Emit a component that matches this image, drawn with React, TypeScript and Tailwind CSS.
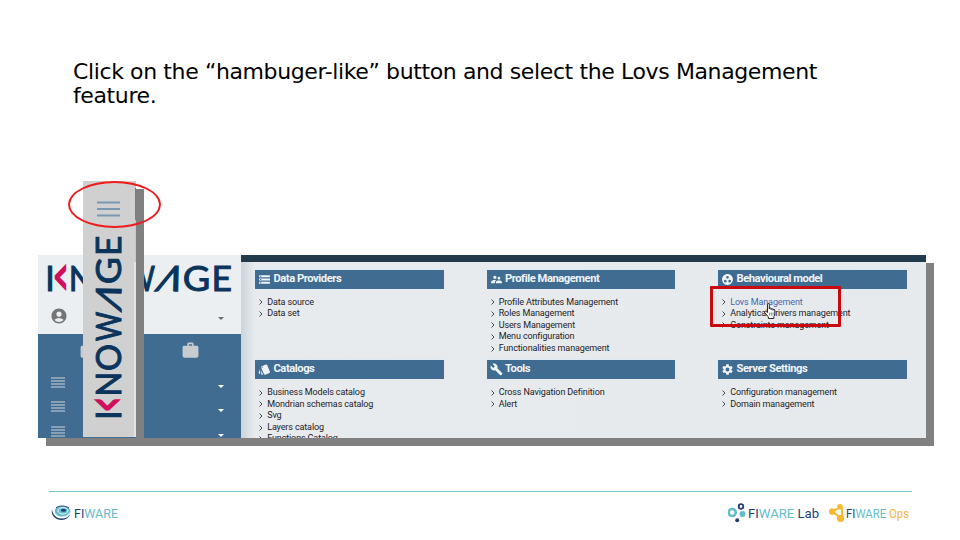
import React from "react";
import {
  MdAccountCircle,
  MdBuild,
  MdGroupWork,
  MdSettings,
  MdStorage,
  MdStyle,
  MdSupervisorAccount,
  MdWork,
} from "react-icons/md";
import type { IconType } from "react-icons";

type Section = { title: string; icon: IconType; items: string[]; active?: string };

const sections: Section[] = [
  { title: "Data Providers", icon: MdStorage, items: ["Data source", "Data set"] },
  {
    title: "Profile Management",
    icon: MdSupervisorAccount,
    items: [
      "Profile Attributes Management",
      "Roles Management",
      "Users Management",
      "Menu configuration",
      "Functionalities management",
    ],
  },
  {
    title: "Behavioural model",
    icon: MdGroupWork,
    items: ["Lovs Management", "Analytical drivers management", "Constraints management"],
    active: "Lovs Management",
  },
  {
    title: "Catalogs",
    icon: MdStyle,
    items: [
      "Business Models catalog",
      "Mondrian schemas catalog",
      "Svg",
      "Layers catalog",
      "Functions Catalog",
    ],
  },
  { title: "Tools", icon: MdBuild, items: ["Cross Navigation Definition", "Alert"] },
  {
    title: "Server Settings",
    icon: MdSettings,
    items: ["Configuration management", "Domain management"],
  },
];

function KnowageLogo({ className }: { className?: string }) {
  return (
    <svg
      viewBox="0 0 184 26"
      width="184"
      height="26"
      className={`block overflow-visible font-['Lato',sans-serif] text-[34.5px] ${className ?? ""}`}
      fill="#0b345c"
      stroke="#0b345c"
      strokeWidth="1"
    >
      <text x="-2.7" y="25.2" textLength="9.5" lengthAdjust="spacingAndGlyphs">I</text>
      <text transform="translate(5.2 29) scale(0.76 1.5)" x="0" y="0" fill="#d0105c" stroke="#d0105c" strokeWidth="1.7">
        &lt;
      </text>
      <text x="20.8" y="25.2" textLength="25" lengthAdjust="spacingAndGlyphs">N</text>
      <text x="46.8" y="25.2" textLength="27.5" lengthAdjust="spacingAndGlyphs">O</text>
      <text x="77" y="25.2" textLength="30" lengthAdjust="spacingAndGlyphs">W</text>
      <text transform="translate(106.5 25.2) skewX(-23)" textLength="23" lengthAdjust="spacingAndGlyphs" strokeWidth="1.4">
        Λ
      </text>
      <text x="134.7" y="25.2" textLength="27.5" lengthAdjust="spacingAndGlyphs">G</text>
      <text x="163.5" y="25.2" textLength="20.5" lengthAdjust="spacingAndGlyphs">E</text>
    </svg>
  );
}

function Caret({ className }: { className: string }) {
  return (
    <svg viewBox="0 0 6 3" className={`h-[3px] w-[6px] ${className}`} fill="currentColor">
      <path d="M0 0h6L3 3z" />
    </svg>
  );
}

function MenuLines() {
  return (
    <svg viewBox="0 0 14 11" className="h-[11px] w-[14px]" stroke="#cdd3d8" strokeWidth="1.1">
      <path d="M0 1h14M0 4h14M0 7h14M0 10h14" />
    </svg>
  );
}

function Sidebar() {
  return (
    <aside className="flex h-full w-[203px] shrink-0 flex-col">
      <div className="h-[79px] bg-[#ebeff2] pt-[10.5px]">
        <div className="pl-[10px]">
          <KnowageLogo />
        </div>
        <div className="flex items-center justify-between pt-[15px] pl-[11.5px] pr-[17px]">
          <MdAccountCircle className="size-[18px] text-[#757575]" />
          <Caret className="mt-[6px] text-[#6b6b6b]" />
        </div>
      </div>
      <div className="flex-1 overflow-hidden bg-[#406c92]">
        <div className="flex h-[36px] pt-[7px] text-[#c9cccf]">
          <MdWork className="ml-[41px] size-[19px]" />
          <MdWork className="ml-[82.5px] size-[19px]" />
        </div>
        {[0, 1, 2].map((row) => (
          <div key={row} className="flex h-[24.5px] items-center justify-between pl-[13px] pr-[17px]">
            <MenuLines />
            <Caret className="mt-[8px] text-white" />
          </div>
        ))}
      </div>
    </aside>
  );
}

function MenuSection({ title, icon: Icon, items, active }: Section) {
  return (
    <section className="w-[188.5px]">
      <h2 className="flex h-[19px] items-center bg-[#406c92] pl-[3px] text-[11.2px] font-bold tracking-[-0.45px] text-[#f1f5f8] shadow-[0_-2px_0_#dfeaf3]">
        <Icon className="mr-[2.5px] size-[13px] shrink-0" />
        <span className="whitespace-nowrap">{title}</span>
      </h2>
      <ul className="pt-[8px]">
        {items.map((item) => (
          <li
            key={item}
            className={`flex h-[11.6px] items-center pl-[4px] text-[9px] leading-[11.6px] tracking-[-0.12px] whitespace-nowrap ${
              item === active ? "text-[#4668ae]" : "text-[#1d2226]"
            }`}
          >
            <svg
              viewBox="0 0 4 6"
              className="mr-[4.2px] h-[6px] w-[4px] shrink-0"
              fill="none"
              stroke="#444b50"
              strokeWidth="1"
            >
              <path d="M.5.5 3 3 .5 5.5" />
            </svg>
            <span>{item}</span>
          </li>
        ))}
      </ul>
    </section>
  );
}

function MenuStrip() {
  return (
    <div className="absolute top-[181px] left-[83px] h-[256px] w-[53px] bg-[#d0d0d0]">
      <div className="absolute top-[8px] left-[53px] h-[249px] w-[8px] bg-[#808080]" />
      <div className="absolute top-0 right-0 h-[81px] w-px bg-[#c2c7ca]" />
      <div className="absolute top-[7px] right-0 h-[32px] w-px bg-[#5c86a6]" />
      <div className="absolute right-0 bottom-0 h-[175px] w-[2px] bg-[#e2e4e5]" />
      <svg viewBox="0 0 23 16" className="mt-[20px] ml-[14px] block h-[16px] w-[23px]" stroke="#7698b3" strokeWidth="2">
        <path d="M0 1.5h23M0 8h23M0 14.5h23" />
      </svg>
      <KnowageLogo className="absolute top-[235.5px] left-[12.5px] origin-top-left -rotate-90 scale-x-[0.985]" />
    </div>
  );
}

function HandCursor() {
  return (
    <svg viewBox="0 0 12 16" className="absolute top-[303px] left-[764px] h-[16px] w-[12px]">
      <path
        d="M3.5 9.5V1.6Q3.5.5 4.4.5T5.3 1.6V6q0-1 .9-1t1 1v.6q0-1 .9-1t.9 1v.7q0-.9.9-.9t.9.9V11q0 1.5-1 2.7v1.8H4.4v-1.5L.7 9.6q-.5-.9.2-1.3.7-.4 1.4.3z"
        fill="#fff"
        stroke="#111"
        strokeWidth=".9"
      />
      <path d="M5.6 9.5v3M7.3 9.5v3M9 9.5v3" stroke="#333" strokeWidth=".6" />
    </svg>
  );
}

function Wordmark({ suffix, suffixClass, length }: { suffix?: string; suffixClass?: string; length: number }) {
  return (
    <svg width={length} height="16" className="block overflow-visible font-['Roboto',sans-serif] text-[13.5px]">
      <text x="0" y="13" textLength={length} lengthAdjust="spacingAndGlyphs" fill="#67bcc9">
        <tspan fill="#233f74">FI</tspan>WARE
        {suffix && <tspan className={suffixClass}>{" " + suffix}</tspan>}
      </text>
    </svg>
  );
}

function Footer() {
  return (
    <footer className="mt-[53px] ml-[49px] w-[863px]">
      <div className="h-px bg-[#6fc6cf]" />
      <div className="flex items-start justify-between pt-[10px]">
        <div className="flex items-center gap-[3px] pt-[3px] pl-[2px]">
          <svg viewBox="0 0 20 16" className="h-[16px] w-[20px]" fill="none">
            <ellipse cx="11.5" cy="6.5" rx="8" ry="5.6" fill="#61b9cc" />
            <path d="M1 4.5C-.5 11 5 15.5 11 15c4-.3 7-2.3 8.3-5.5-3 3.4-6 4.3-9.3 4C5.3 13 2 10 1 4.5z" fill="#1e3f72" />
            <path d="M3.3 5c-.3 4 3 7 7.5 7 3.5 0 6.5-1.6 8-4.5" stroke="#fff" strokeWidth="1" />
            <ellipse cx="12" cy="5.8" rx="5" ry="3.2" stroke="#fff" strokeWidth=".9" />
            <ellipse cx="12.5" cy="5.3" rx="2.6" ry="1.5" fill="#1e3f72" />
            <path d="M5 2.8C8 .5 14 .3 18 3" stroke="#1e3f72" strokeWidth="1" />
          </svg>
          <Wordmark length={44} />
        </div>
        <div className="flex items-center pr-[3px]">
          <svg viewBox="0 0 20 22" className="h-[22px] w-[20px]" fill="none">
            <circle cx="4.2" cy="10.5" r="3.5" stroke="#67bcc9" strokeWidth="2.6" />
            <circle cx="13" cy="4.5" r="2.3" stroke="#233f74" strokeWidth="1.8" />
            <circle cx="14.5" cy="12" r="3" fill="#67bcc9" />
            <circle cx="9.2" cy="18.3" r="2" fill="#233f74" />
          </svg>
          <div>
            <Wordmark suffix="Lab" suffixClass="fill-[#233f74]" length={71} />
          </div>
          <svg viewBox="0 0 18 20" className="ml-[10px] h-[20px] w-[18px]" fill="#f6b82d">
            <path d="M3.5 8.5 11.5 4M3.5 8.5l8 6.500M12 4q2.500 5 0 11" fill="none" stroke="#f6b82d" strokeWidth="2" />
            <circle cx="3.2" cy="8.5" r="3.2" />
            <circle cx="11" cy="3.8" r="2.8" />
            <circle cx="11.5" cy="15.3" r="3.6" />
          </svg>
          <div className="-ml-px">
            <Wordmark suffix="Ops" suffixClass="fill-[#f3b73a]" length={63} />
          </div>
        </div>
      </div>
    </footer>
  );
}

export default function App() {
  return (
    <main className="relative flex h-[540px] w-[960px] flex-col overflow-hidden bg-white font-['Roboto',sans-serif]">
      <p className="h-[195px] shrink-0 pt-[60px] pl-[73px] font-['DejaVu_Sans',sans-serif] text-[22px] leading-[24px] tracking-[-0.385px] whitespace-nowrap text-black">
        Click on the “hambuger-like” button and select the Lovs Management
        <br />
        feature.
      </p>
      <div className="mt-[60px] ml-[38px] flex h-[183px] w-[888px] shrink-0 shadow-[8px_8px_0_#808080]">
        <Sidebar />
        <div className="h-full flex-1 overflow-hidden border-t-[7px] border-[#223b4c] bg-linear-to-r from-[#ccd4d9] via-[#e7ebee] via-[2%] to-[#e6eaed]">
          <div className="grid grid-cols-[231.5px_231.5px_188.5px] grid-rows-[90.5px_90.5px] pt-[7.5px] pl-[14px]">
            {sections.map((section) => (
              <MenuSection key={section.title} {...section} />
            ))}
          </div>
        </div>
      </div>
      <div className="-mb-px h-px shrink-0" />
      <Footer />
      <MenuStrip />
      <div className="absolute top-[181px] left-[67.5px] h-[47px] w-[93px] rounded-[50%] border-2 border-[#ee1c1c]" />
      <div className="absolute top-[286px] left-[710px] h-[41px] w-[131px] rounded-[1px] border-3 border-[#cb0a10]" />
      <HandCursor />
    </main>
  );
}
